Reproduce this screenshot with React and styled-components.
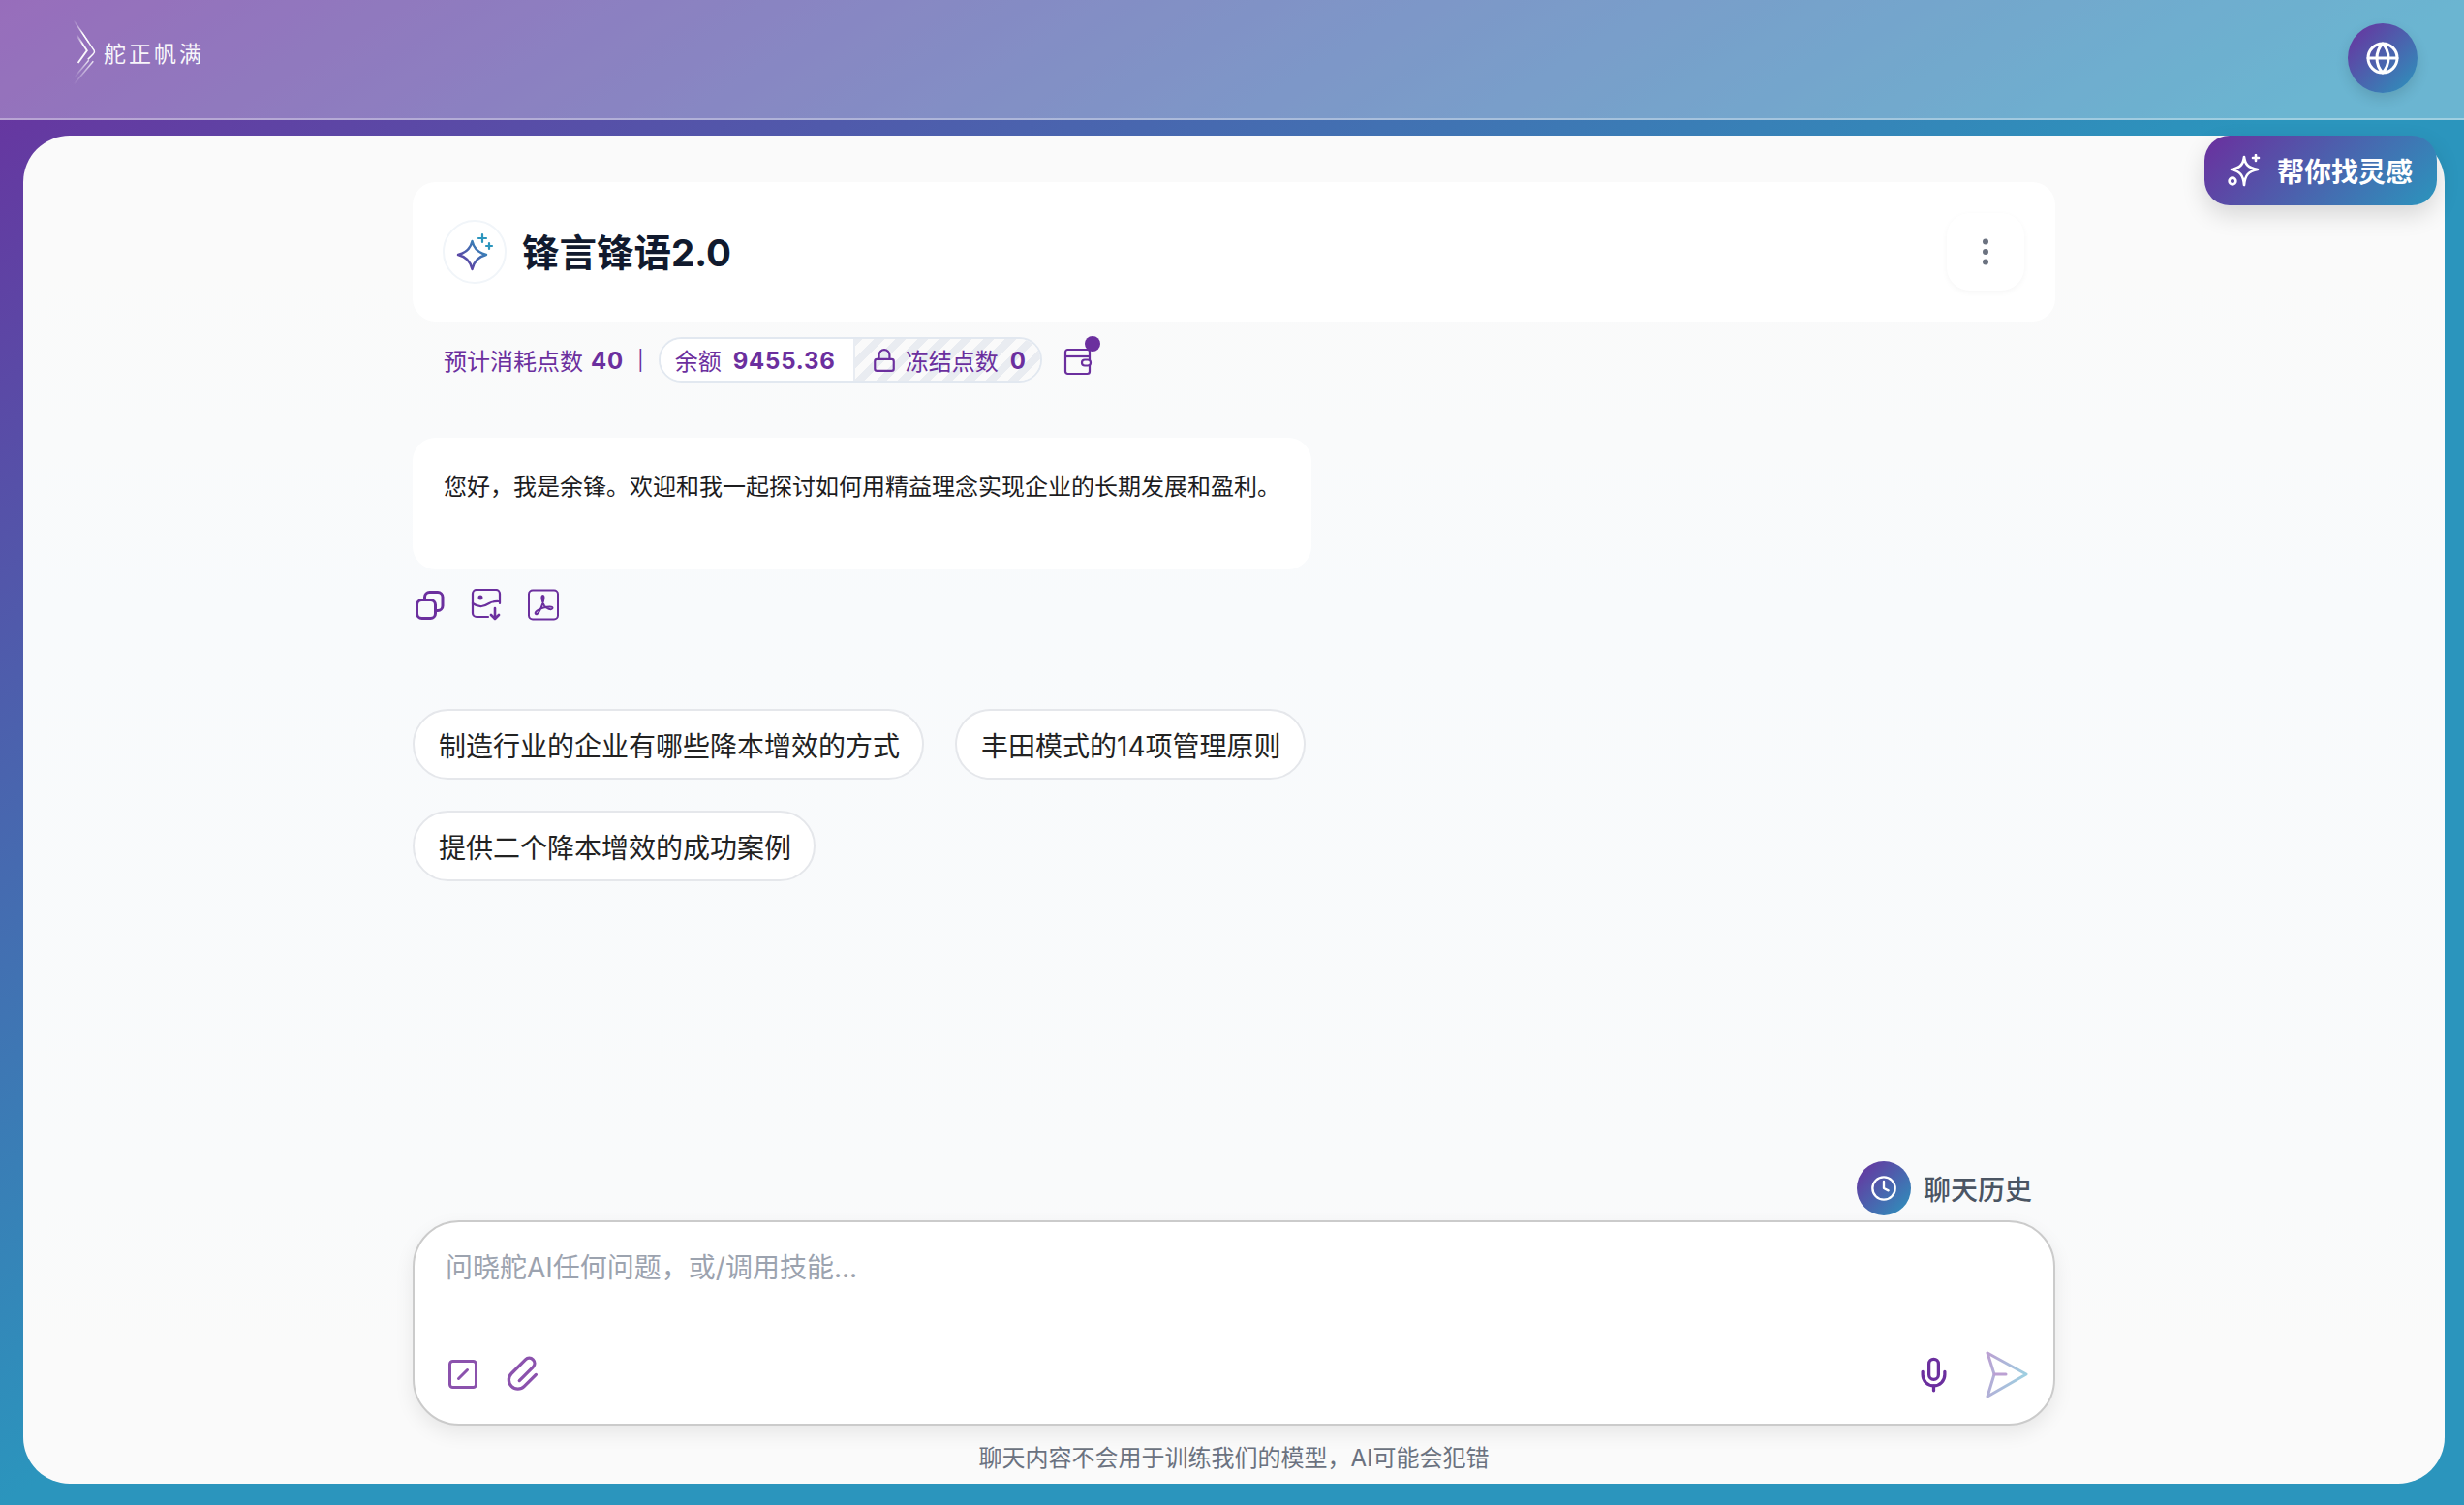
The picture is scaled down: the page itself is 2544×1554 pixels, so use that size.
import React from 'react';
import styled, { createGlobalStyle } from 'styled-components';
import { Globe, Clock, Lock, Mic, SquareSlash, EllipsisVertical } from 'lucide-react';

const PURPLE = '#6b2f9e';
const BLUE = '#2b95bd';
const FONT = 'Inter, "Noto Sans CJK SC", "Noto Sans", sans-serif';

const Global = createGlobalStyle`
  html, body { margin: 0; padding: 0; }
  body { font-family: ${FONT}; background: ${BLUE}; }
  * { box-sizing: border-box; }
`;

const Page = styled.div`
  height: 100vh;
  min-height: 1554px;
  display: flex;
  flex-direction: column;
  overflow: hidden;
  background: linear-gradient(to bottom right, ${PURPLE} 0%, ${BLUE} 50%, ${BLUE} 100%);
`;

const Header = styled.header`
  height: 124px;
  flex: none;
  display: flex;
  align-items: center;
  justify-content: space-between;
  padding: 0 48px 2px 72px;
  background: rgba(255, 255, 255, 0.3);
  border-bottom: 2px solid rgba(255, 255, 255, 0.35);
`;

const Logo = styled.div`
  display: flex;
  align-items: center;
  gap: 3px;
  margin-bottom: 12px;
`;

const LogoText = styled.span`
  font-size: 23px;
  font-weight: 400;
  letter-spacing: 3px;
  color: rgba(255, 255, 255, 0.95);
  line-height: 30px;
  margin-top: 3px;
`;

const GlobeButton = styled.button`
  width: 72px;
  height: 72px;
  border: 0;
  padding: 0;
  border-radius: 50%;
  display: flex;
  align-items: center;
  justify-content: center;
  color: #fff;
  background: linear-gradient(135deg, ${PURPLE}, ${BLUE});
  box-shadow: 0 6px 14px rgba(0, 0, 0, 0.12);
`;

const Panel = styled.main`
  position: relative;
  flex: 1;
  margin: 16px 20px 22px 24px;
  border-radius: 48px;
  background: linear-gradient(to bottom, #fafafa 10%, #f8fafc 35%, #f9fafb 78%, #fafafa 90%);
  padding: 48px 0 8px;
  display: flex;
  flex-direction: column;
  align-items: center;
`;

const FloatButton = styled.button`
  position: absolute;
  top: 0;
  right: 8px;
  width: 240px;
  height: 72px;
  border: 0;
  border-radius: 26px;
  display: flex;
  align-items: center;
  gap: 17px;
  padding: 0 0 0 24px;
  color: #fff;
  font-family: ${FONT};
  font-size: 28px;
  font-weight: 600;
  background: linear-gradient(135deg, ${PURPLE}, ${BLUE});
  box-shadow: 0 10px 24px rgba(0, 0, 0, 0.14);
`;

const Column = styled.div`
  width: 1696px;
  flex: 1;
  display: flex;
  flex-direction: column;
`;

const TitleCard = styled.section`
  height: 144px;
  flex: none;
  background: #fff;
  border-radius: 24px;
  display: flex;
  align-items: center;
  justify-content: space-between;
  padding: 0 32px 0 31px;
`;

const TitleGroup = styled.div`
  display: flex;
  align-items: center;
  gap: 16px;
`;

const SparkCircle = styled.div`
  width: 66px;
  height: 66px;
  border-radius: 50%;
  border: 2px solid #f1f5f9;
  display: flex;
  align-items: center;
  justify-content: center;
`;

const Title = styled.h1`
  margin: 2px 0 0;
  font-size: 38.5px;
  line-height: 50px;
  font-weight: 700;
  color: #111a2e;
`;

const MenuButton = styled.button`
  width: 80px;
  height: 80px;
  border: 0;
  border-radius: 24px;
  background: #fff;
  display: flex;
  align-items: center;
  justify-content: center;
  color: #6b7280;
  box-shadow: 0 2px 6px rgba(0, 0, 0, 0.04);
`;

const Stats = styled.div`
  display: flex;
  align-items: center;
  margin-top: 16px;
  padding-left: 32px;
  height: 47px;
  font-size: 24px;
  color: ${PURPLE};
`;

const Num = styled.b`
  font-weight: 700;
  letter-spacing: 0.8px;
  margin-left: ${(p) => p.$gap || 12}px;
  position: relative;
  top: 1px;
`;

const Sep = styled.span`
  margin: 0 15px 0 14px;
  font-size: 20px;
`;

const Pill = styled.div`
  display: flex;
  height: 47px;
  width: 396px;
  border: 2px solid #e2e8f0;
  border-radius: 24px;
  overflow: hidden;
`;

const Balance = styled.div`
  width: 199px;
  flex: none;
  display: flex;
  align-items: center;
  padding-left: 15px;
  background: #fff;
`;

const Frozen = styled.div`
  flex: 1;
  display: flex;
  align-items: center;
  padding-left: 17px;
  border-left: 2px solid #e8ecf2;
  background: repeating-linear-gradient(-45deg, #e9ecf1 0 8px, #fafafa 8px 16px);
`;

const FrozenLabel = styled.span`
  margin-left: 9px;
`;

const WalletWrap = styled.div`
  position: relative;
  width: 30px;
  height: 30px;
  margin-left: 22px;
  margin-top: 5px;
`;

const Dot = styled.span`
  position: absolute;
  top: -12px;
  right: -8px;
  width: 16px;
  height: 16px;
  border-radius: 50%;
  background: ${PURPLE};
`;

const Bubble = styled.div`
  margin-top: 57px;
  width: 928px;
  height: 136px;
  background: #fff;
  border-radius: 24px;
  padding: 31px 32px;
  font-size: 24px;
  line-height: 40px;
  color: #1c1c1e;
`;

const Actions = styled.div`
  display: flex;
  align-items: center;
  gap: 27px;
  margin-top: 20px;
  padding-left: 3px;
  height: 33px;
  color: ${PURPLE};
`;

const Chips = styled.div`
  display: flex;
  flex-wrap: wrap;
  gap: 32px;
  width: 1000px;
  margin-top: 91px;
`;

const Chip = styled.button`
  height: 73px;
  padding: 0 23px 0 25px;
  border: 2px solid #e5e7eb;
  border-radius: 37px;
  background: #fff;
  font-family: ${FONT};
  font-size: 28px;
  color: #222;
`;

const Bottom = styled.div`
  margin-top: auto;
`;

const HistoryRow = styled.div`
  display: flex;
  justify-content: flex-end;
  align-items: center;
  gap: 13px;
  padding-right: 24px;
  margin-bottom: 5px;
  font-size: 28px;
  font-weight: 500;
  color: #4b5563;
`;

const HistoryIcon = styled.span`
  width: 56px;
  height: 56px;
  border-radius: 50%;
  display: flex;
  align-items: center;
  justify-content: center;
  color: #fff;
  background: linear-gradient(135deg, ${PURPLE}, ${BLUE});
`;

const InputBox = styled.div`
  height: 212px;
  background: #fff;
  border: 2px solid #cbcbcb;
  border-radius: 48px;
  box-shadow: 0 8px 20px rgba(0, 0, 0, 0.08);
  display: flex;
  flex-direction: column;
  padding: 27px 25px 25px 32px;
`;

const Placeholder = styled.div`
  font-size: 28px;
  line-height: 40px;
  color: #9ca3af;
`;

const Toolbar = styled.div`
  margin-top: auto;
  height: 52px;
  display: flex;
  align-items: center;
  justify-content: space-between;
`;

const ToolGroup = styled.div`
  display: flex;
  align-items: center;
  gap: ${(p) => p.$gap}px;
  color: ${(p) => p.$color};
`;

const Footer = styled.p`
  margin: 16px 0 0;
  text-align: center;
  font-size: 24px;
  line-height: 36px;
  color: #6b7280;
`;

const LogoMark = () => (
  <svg width="32" height="70" viewBox="0 0 32 76" fill="none">
    <defs>
      <linearGradient id="lgA" x1="0" y1="0" x2="0.6" y2="1">
        <stop offset="0" stopColor="#fff" stopOpacity="0" />
        <stop offset="0.5" stopColor="#fff" stopOpacity="0.95" />
        <stop offset="1" stopColor="#fff" stopOpacity="0.95" />
      </linearGradient>
      <linearGradient id="lgB" x1="1" y1="0" x2="0" y2="1">
        <stop offset="0" stopColor="#fff" stopOpacity="0.8" />
        <stop offset="1" stopColor="#fff" stopOpacity="0" />
      </linearGradient>
    </defs>
    <path d="M3 2 L26 36 Q27 38 25 40 L19 46" stroke="url(#lgA)" strokeWidth="1.6" />
    <path d="M6 18 L18 36 L8 50" stroke="url(#lgA)" strokeWidth="2" />
    <path d="M10 12 L20 27" stroke="url(#lgA)" strokeWidth="1.4" />
    <path d="M25 48 L3 74" stroke="url(#lgB)" strokeWidth="1.6" />
    <path d="M20 47 L4 66" stroke="url(#lgB)" strokeWidth="1.6" />
  </svg>
);

const TitleSpark = () => (
  <svg width="40" height="40" viewBox="0 0 40 40" fill="none">
    <defs>
      <linearGradient id="spark" x1="0" y1="1" x2="1" y2="0">
        <stop offset="0" stopColor={PURPLE} />
        <stop offset="1" stopColor={BLUE} />
      </linearGradient>
    </defs>
    <path
      d="M17.5 9 Q20 20 32 23 Q20 26 17.5 38 Q15 26 3 23 Q15 20 17.5 9Z"
      stroke="url(#spark)"
      strokeWidth="2.4"
      strokeLinejoin="round"
    />
    <path d="M28 2v8M24 6h8M35 11v6M32 14h6" stroke={BLUE} strokeWidth="2.2" strokeLinecap="round" />
  </svg>
);

const FloatSpark = () => (
  <svg width="34" height="34" viewBox="0 0 34 34" fill="none" stroke="#fff" strokeWidth="2.6" strokeLinecap="round" strokeLinejoin="round">
    <path d="M17 3 C18 11 21 14 31 16 C21 18 18 22 17 32 C16 22 13 18 4 16 C13 14 16 11 17 3Z" />
    <circle cx="5" cy="28" r="3.4" />
    <path d="M29 1v6M26 4h6" />
  </svg>
);

const CopyIcon = () => (
  <svg width="30" height="30" viewBox="0 0 30 30" fill="none" stroke="currentColor" strokeWidth="3" strokeLinejoin="round">
    <rect x="1.5" y="9.5" width="19" height="19" rx="5" />
    <path d="M9.5 9V6.5a5 5 0 0 1 5-5h8.5a5 5 0 0 1 5 5v9a5 5 0 0 1-5 5h-2.5" />
  </svg>
);

const ImageDownIcon = () => (
  <svg width="32" height="33" viewBox="0 0 32 33" fill="none" stroke="currentColor" strokeWidth="2.2" strokeLinecap="round" strokeLinejoin="round">
    <path d="M18 29H6a4 4 0 0 1-4-4V5a4 4 0 0 1 4-4h20a4 4 0 0 1 4 4v10" />
    <path d="M2 15 C9 20 14 18 19 15 C23 12.5 26 13 30 13" />
    <circle cx="10" cy="9" r="1.4" fill="currentColor" />
    <path d="M25 20v11M21 27l4 4 4-4" strokeWidth="2.6" />
  </svg>
);

const PdfIcon = () => (
  <svg width="32" height="33" viewBox="0 0 32 33" fill="none" stroke="currentColor" strokeWidth="2" strokeLinejoin="round">
    <rect x="1" y="1.5" width="30" height="30" rx="4" />
    <path d="M15.5 7 C13.5 7 14.5 13 17 17.5 C19 20.5 24.5 22.5 25.5 20 C26 18 21 18 16 19.5 C11 21 6.5 24 8 26 C10 27.5 13 22 15 16 C16 13 17.5 7 15.5 7Z" />
  </svg>
);

const WalletIcon = () => (
  <svg width="30" height="30" viewBox="0 0 30 30" fill="none" stroke="currentColor" strokeWidth="2.2" strokeLinejoin="round">
    <rect x="2" y="2" width="25" height="25" rx="2.5" />
    <path d="M2 9h25" />
    <rect x="19" y="12.5" width="9" height="6" rx="3" fill="#fafafa" />
  </svg>
);

const ClipIcon = () => (
  <svg width="44" height="44" viewBox="0 0 40 40" fill="none" stroke="currentColor" strokeWidth="3" strokeLinecap="round">
    <g transform="rotate(45 20.5 20)">
      <path d="M29 12 V27.5 a8.5 8.5 0 0 1 -17 0 V9 a5 5 0 0 1 10 0 V27" />
    </g>
  </svg>
);

const SendIcon = () => (
  <svg width="48" height="52" viewBox="0 0 48 52" fill="none" opacity="0.45" strokeWidth="3" strokeLinecap="round" strokeLinejoin="round">
    <defs>
      <linearGradient id="send" x1="0" y1="0" x2="1" y2="0.4" gradientUnits="objectBoundingBox">
        <stop offset="0" stopColor={PURPLE} />
        <stop offset="1" stopColor={BLUE} />
      </linearGradient>
    </defs>
    <path d="M5 4 L45 26 L5 49 L12 26 Z" stroke="url(#send)" />
    <path d="M12 26 H24" stroke={PURPLE} />
  </svg>
);

export default function App() {
  return (
    <>
      <Global />
      <Page>
        <Header>
          <Logo>
            <LogoMark />
            <LogoText>舵正帆满</LogoText>
          </Logo>
          <GlobeButton aria-label="language">
            <Globe size={36} strokeWidth={2} />
          </GlobeButton>
        </Header>
        <Panel>
          <FloatButton>
            <FloatSpark />
            帮你找灵感
          </FloatButton>
          <Column>
            <TitleCard>
              <TitleGroup>
                <SparkCircle>
                  <TitleSpark />
                </SparkCircle>
                <Title>锋言锋语2.0</Title>
              </TitleGroup>
              <MenuButton aria-label="more">
                <EllipsisVertical size={36} strokeWidth={2} />
              </MenuButton>
            </TitleCard>
            <Stats>
              <span>预计消耗点数</span>
              <Num $gap={8}>40</Num>
              <Sep>|</Sep>
              <Pill>
                <Balance>
                  <span>余额</span>
                  <Num>9455.36</Num>
                </Balance>
                <Frozen>
                  <Lock size={26} strokeWidth={2} />
                  <FrozenLabel>冻结点数</FrozenLabel>
                  <Num>0</Num>
                </Frozen>
              </Pill>
              <WalletWrap>
                <WalletIcon />
                <Dot />
              </WalletWrap>
            </Stats>
            <Bubble>您好，我是余锋。欢迎和我一起探讨如何用精益理念实现企业的长期发展和盈利。</Bubble>
            <Actions>
              <CopyIcon />
              <ImageDownIcon />
              <PdfIcon />
            </Actions>
            <Chips>
              <Chip>制造行业的企业有哪些降本增效的方式</Chip>
              <Chip>丰田模式的14项管理原则</Chip>
              <Chip>提供二个降本增效的成功案例</Chip>
            </Chips>
            <Bottom>
              <HistoryRow>
                <HistoryIcon>
                  <Clock size={28} strokeWidth={2} />
                </HistoryIcon>
                聊天历史
              </HistoryRow>
              <InputBox>
                <Placeholder>问晓舵AI任何问题，或/调用技能...</Placeholder>
                <Toolbar>
                  <ToolGroup $gap={22} $color="#8b52ad">
                    <SquareSlash size={36} strokeWidth={2} />
                    <ClipIcon />
                  </ToolGroup>
                  <ToolGroup $gap={31} $color={PURPLE}>
                    <Mic size={39} strokeWidth={2} />
                    <SendIcon />
                  </ToolGroup>
                </Toolbar>
              </InputBox>
              <Footer>聊天内容不会用于训练我们的模型，AI可能会犯错</Footer>
            </Bottom>
          </Column>
        </Panel>
      </Page>
    </>
  );
}
